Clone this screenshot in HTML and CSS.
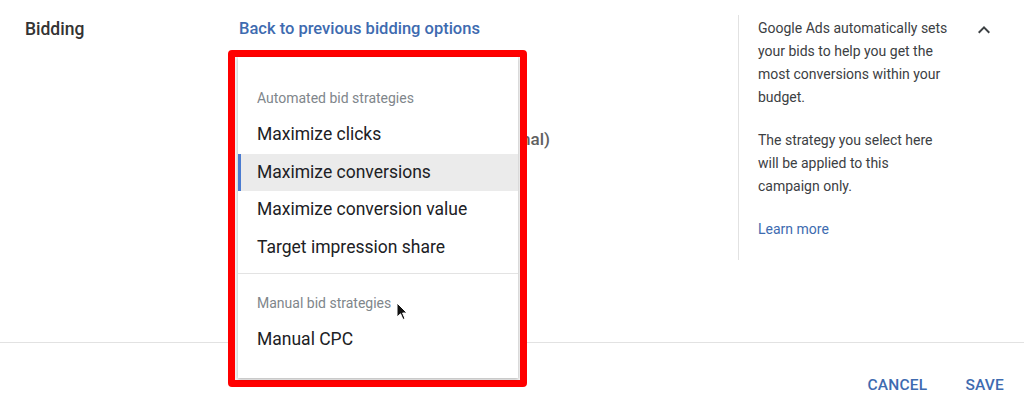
FILE: index.html
```html
<!DOCTYPE html>
<html lang="en">
<head>
<meta charset="utf-8">
<title>Bidding</title>
<link rel="stylesheet" href="styles.css">
</head>
<body>
<div class="page">
  <section class="bidding">
    <div class="label">Bidding</div>
    <div class="main">
      <a class="back-link" href="#">Back to previous bidding options</a>
      <div class="option-row">Set a target cost per action (optional)</div>

      <div class="annotation">
        <div class="menu">
          <div class="group-header">Automated bid strategies</div>
          <div class="item">Maximize clicks</div>
          <div class="item selected">Maximize conversions</div>
          <div class="item">Maximize conversion value</div>
          <div class="item">Target impression share</div>
          <div class="divider"></div>
          <div class="group-header">Manual bid strategies</div>
          <div class="item">Manual CPC</div>
        </div>
      </div>
    </div>
    <aside class="help">
      <div class="help-text">
        <p>Google Ads automatically sets<br>your bids to help you get the<br>most conversions within your<br>budget.</p>
        <p>The strategy you select here<br>will be applied to this<br>campaign only.</p>
        <a class="learn" href="#">Learn more</a>
      </div>
      <svg class="chevron" viewBox="0 0 24 24" width="24" height="24" aria-hidden="true">
        <path d="M12 8l-6 6 1.41 1.41L12 10.83l4.59 4.58L18 14z" fill="#3c4043"/>
      </svg>
    </aside>
  </section>
  <footer class="actions">
    <button class="btn">CANCEL</button>
    <button class="btn">SAVE</button>
  </footer>
  <svg class="cursor" viewBox="0 0 12 19" width="12" height="19" aria-hidden="true">
    <path d="M1 1 L1 15 L4.5 11.8 L7 17.5 L9 16.6 L6.6 11 L11 11 Z" fill="#111" stroke="#fff" stroke-width="1" stroke-linejoin="round"/>
  </svg>
</div>
</body>
</html>
```

FILE: styles.css
```css
* { box-sizing: border-box; }

html, body {
  margin: 0;
  padding: 0;
  background: #ffffff;
}

body {
  font-family: Roboto, "Liberation Sans", Arial, sans-serif;
  color: #202124;
  width: 1024px;
  height: 414px;
  overflow: hidden;
}

.page {
  position: relative;
  width: 1024px;
  height: 414px;
}

.bidding {
  display: grid;
  grid-template-columns: 238px 500px 1fr;
  height: 343px;
  border-bottom: 1px solid #e2e2e2;
}

.label {
  padding: 19px 0 0 25px;
  font-size: 17.5px;
  line-height: 20px;
  font-weight: 500;
  color: #333333;
}

.main {
  position: relative;
  padding: 19px 0 0 1px;
}

.back-link {
  display: inline-block;
  font-size: 16.5px;
  line-height: 20px;
  font-weight: 500;
  color: #3e6bb0;
  text-decoration: none;
}

.option-row {
  width: 311px;
  margin-top: 90px;
  text-align: right;
  font-size: 17px;
  line-height: 20px;
  font-weight: 500;
  color: #616161;
  white-space: nowrap;
}

/* red annotation frame around the open dropdown */
.annotation {
  position: absolute;
  left: -10px;
  top: 50px;
  width: 299px;
  height: 337px;
  border: 7px solid #ff0000;
  border-radius: 4px;
  padding: 0 2px 2px 3px;
  background: #f4f4f4;
}

.menu {
  background: #ffffff;
  height: 100%;
  padding-top: 12px;
  box-shadow: 0 1px 3px rgba(0, 0, 0, 0.28);
}

.group-header {
  padding: 19px 0 8px 19px;
  font-size: 14px;
  line-height: 20px;
  color: #80868b;
}

.item {
  height: 37.5px;
  line-height: 37.5px;
  padding-left: 19px;
  font-size: 17.5px;
  color: #202124;
}

.item.selected {
  background: #ebebeb;
  box-shadow: inset 3px 0 0 #4a7bd0;
}

.divider {
  margin-top: 7px;
  height: 1px;
  background: #e3e3e3;
}

.help {
  display: flex;
  align-items: flex-start;
  margin-top: 15px;
  height: 245px;
  border-left: 1px solid #e2e2e2;
  padding: 2px 28px 0 19px;
}

.help-text {
  font-size: 14px;
  line-height: 23px;
  color: #3c4043;
}

.help-text p {
  margin: 0 0 20px 0;
}

.learn {
  color: #3e6bb0;
  text-decoration: none;
}

.chevron {
  margin-left: auto;
  margin-top: 1px;
  flex: none;
}

.actions {
  display: flex;
  justify-content: flex-end;
  align-items: center;
  gap: 22px;
  padding: 32px 12px 0 0;
}

.btn {
  border: none;
  background: none;
  padding: 0 8px;
  font-family: inherit;
  font-size: 15.5px;
  line-height: 20px;
  font-weight: 500;
  color: #3e6bb0;
  letter-spacing: 0.2px;
}

.cursor {
  position: absolute;
  left: 396px;
  top: 302px;
}
```
